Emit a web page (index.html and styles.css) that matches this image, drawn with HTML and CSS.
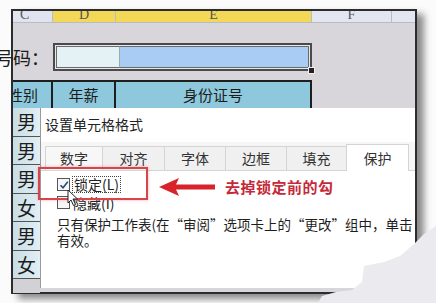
FILE: index.html
```html
<!DOCTYPE html>
<html lang="zh-CN">
  <head>
    <meta charset="utf-8">
    <title>设置单元格格式</title>
    <link rel="stylesheet" href="styles.css">
  </head>
  <body>
    <div class="page">
      <div class="sheet">
        <div class="cols">
          <div class="col c">C</div>
          <div class="col d">D</div>
          <div class="col e">E</div>
          <div class="col f">F</div>
          <div class="col g"></div>
        </div>
        <div class="grey">
          <div class="name-row">
            <div class="label"><span>号码：</span></div>
            <div class="input">
              <div class="in-d"></div>
              <div class="in-e"></div>
              <span class="handle"></span>
            </div>
          </div>
          <div class="head-row">
            <div class="hcell w1"><span>性别</span></div>
            <div class="hcell w2">年薪</div>
            <div class="hcell w3">身份证号</div>
          </div>
        </div>
        <div class="lower">
          <div class="gender">
            <div class="g-cell">男</div>
            <div class="g-cell">男</div>
            <div class="g-cell">男</div>
            <div class="g-cell">女</div>
            <div class="g-cell">男</div>
            <div class="g-cell">女</div>
            <div class="g-cell empty"></div>
          </div>
          <div class="dialog">
            <div class="title">设置单元格格式</div>
            <div class="tabs">
              <div class="tab t1">数字</div>
              <div class="tab t2">对齐</div>
              <div class="tab t3">字体</div>
              <div class="tab t4">边框</div>
              <div class="tab t5">填充</div>
              <div class="tab t6 active">保护</div>
            </div>
            <div class="body">
              <div class="check-row">
                <span class="box checked">
                  <svg width="10" height="10" viewBox="0 0 10 10"><path d="M1.5 5.2 L4 7.8 L8.8 1.8" fill="none" stroke="#2a4a78" stroke-width="1.6"/></svg>
                </span>
                <span class="focus">锁定(L)</span>
              </div>
              <div class="check-row">
                <span class="box"></span>
                <span class="plain">隐藏(I)</span>
              </div>
              <p class="note">只有保护工作表(在“审阅”选项卡上的“更改”组中，单击<br>有效。</p>

              <div class="mark"></div>
              <svg class="cursor" width="12" height="18" viewBox="0 0 12 18"><path d="M1 1 L1 14 L4 11 L6.5 16.5 L8.5 15.5 L6 10 L10.5 10 Z" fill="#fff" stroke="#222" stroke-width="1"/></svg>
              <div class="callout">
                <svg class="arrow" width="58" height="20" viewBox="0 0 58 20"><path d="M0 10 L20 1 L17 7.5 L56 7.5 L56 12.5 L17 12.5 L20 19 Z" fill="#d8232a"/></svg>
                <span class="callout-text">去掉锁定前的勾</span>
              </div>
            </div>
          </div>
        </div>
      </div>
      <svg class="torn" width="436" height="303" viewBox="0 0 436 303"><path d="M318 303 L322 296 L336 292 L352 290 L362 282 L364 266 L384 262 L400 256 L414 244 L424 234 L436 226 L436 303 Z" fill="#ebeaef"/></svg>
    </div>
  </body>
</html>
```

FILE: styles.css
```css
html, body {
  margin: 0;
  padding: 0;
}
body {
  background: #fbfbfb;
  font-family: "Noto Sans CJK SC", "Noto Sans", sans-serif;
  color: #222;
  width: 436px;
  height: 303px;
  overflow: hidden;
}
.page {
  position: relative;
  width: 436px;
  height: 303px;
  padding-top: 9px;
  box-sizing: border-box;
}
.sheet {
  margin-left: 11px;
  width: 406px;
  height: 285px;
  border: 2px solid #2c2c2c;
  box-sizing: border-box;
  background: #d8d6da;
  box-shadow: 7px 5px 7px rgba(0, 0, 0, 0.45);
}

/* column letters */
.cols {
  display: flex;
  height: 11px;
  border-bottom: 1px solid #b8bcc4;
}
.col {
  box-sizing: border-box;
  border-right: 1px solid #b8bcc4;
  font-family: "Liberation Serif", serif;
  font-size: 14px;
  line-height: 8px;
  color: #555;
  text-align: center;
  overflow: hidden;
}
.c { width: 40px; background: #dfe4f0; text-align: left; padding-left: 7px; }
.d { width: 63px; background: #f3d757; }
.e { width: 196px; background: #f3d757; }
.f { width: 80px; background: #e1e6f0; }
.g { width: 23px; background: #e1e6f0; border-right: 0; }

.grey {
  box-sizing: border-box;
  height: 85px;
  padding-top: 20px;
}
.name-row {
  display: flex;
  height: 28px;
}
.label {
  display: flex;
  justify-content: flex-end;
  width: 36px;
  margin-left: -13px;
  padding-left: 13px;
  padding-right: 4px;
  overflow: hidden;
  font-size: 18px;
  line-height: 28px;
  white-space: nowrap;
  color: #1c1c1c;
}
.label span {
  flex-shrink: 0;
}
.input {
  position: relative;
  display: flex;
  width: 259px;
  box-sizing: border-box;
  border: 2px solid #4a4a4a;
  padding: 1px;
  background: #e8e8ea;
}
.in-d {
  width: 62px;
  background: #e4f1f5;
  border: 1px solid #6a6a6a;
  border-right: 1px solid #9aa;
}
.in-e {
  flex: 1;
  background: #a8ccf3;
  border: 1px solid #6a6a6a;
  border-left: 0;
}
.handle {
  position: absolute;
  right: -5px;
  bottom: -5px;
  width: 5px;
  height: 5px;
  background: #222;
  border: 1px solid #eee;
}
.head-row {
  display: flex;
  margin-top: 9px;
  width: 299px;
  border-top: 2px solid #1e1e1e;
  border-bottom: 1px solid #1e1e1e;
}
.hcell {
  box-sizing: border-box;
  height: 26px;
  line-height: 26px;
  font-size: 15px;
  background: #8ec8dc;
  border-right: 2px solid #1e1e1e;
  text-align: center;
  white-space: nowrap;
  overflow: hidden;
  color: #1c1c1c;
}
.w1 {
  display: flex;
  justify-content: flex-end;
  width: 40px;
  padding-right: 13px;
}
.w1 span { flex-shrink: 0; }
.w2 { width: 63px; }
.w3 { width: 196px; }

/* lower part: gender column and dialog */
.lower {
  display: flex;
  height: 180px;
}
.gender {
  width: 27px;
  flex-shrink: 0;
  border-right: 1px solid #9a9a9a;
}
.g-cell {
  height: 27.5px;
  line-height: 27.5px;
  border-bottom: 1px solid #555;
  background: linear-gradient(to right, #c9dde6, #e2eff4);
  font-size: 19px;
  text-align: center;
  color: #1c1c1c;
}
.g-cell.empty {
  height: 14px;
  background: #d2d1d6;
  border-bottom: 0;
}
.dialog {
  position: relative;
  flex: 1;
  background: #fff;
}
.title {
  padding: 5px 0 0 4px;
  font-size: 14px;
  line-height: 22px;
  color: #222;
}
.tabs {
  display: flex;
  align-items: flex-end;
  margin-top: 7px;
  padding-left: 4px;
  height: 28px;
  background: #f6f6f6;
  border-bottom: 1px solid #d6d6d6;
}
.tab {
  box-sizing: border-box;
  height: 24px;
  line-height: 23px;
  font-size: 14px;
  text-align: center;
  background: #f0f0f0;
  border: 1px solid #d4d4d4;
  border-bottom: 0;
  margin-right: -1px;
  color: #333;
}
.t1 { width: 58px; background: #f7f7f7; }
.t2 { width: 63px; }
.t3 { width: 62px; }
.t4 { width: 62px; }
.t5 { width: 61px; }
.t6 { width: 63px; }
.tab.active {
  height: 27px;
  line-height: 26px;
  background: #fff;
  margin-bottom: -1px;
}
.body {
  padding: 5px 0 0 16px;
}
.check-row {
  display: flex;
  align-items: center;
  height: 17px;
  font-size: 14px;
  margin-bottom: 1px;
}
.box {
  display: flex;
  align-items: center;
  justify-content: center;
  width: 11px;
  height: 11px;
  border: 1px solid #555;
  background: #f4f6f8;
  margin-right: 3px;
}
.focus {
  outline: 1px dotted #444;
  line-height: 15px;
  padding: 0 1px;
}
.note {
  margin: 5px 0 0;
  font-size: 13.5px;
  line-height: 16px;
  white-space: nowrap;
  color: #1e1e1e;
}

/* red annotation over the dialog */
.mark {
  position: absolute;
  left: -3px;
  top: 59px;
  width: 110px;
  height: 33px;
  box-sizing: border-box;
  border: 2px solid #d7454c;
  box-shadow: 0 0 3px rgba(215, 40, 50, 0.35);
}
.cursor {
  position: absolute;
  left: 26px;
  top: 81px;
}
.callout {
  position: absolute;
  left: 118px;
  top: 68px;
  display: flex;
  align-items: center;
  gap: 8px;
}
.callout-text {
  font-size: 15px;
  font-weight: bold;
  color: #c52a3a;
  letter-spacing: 0.5px;
}
.torn {
  position: absolute;
  left: 0;
  top: 0;
}
```
